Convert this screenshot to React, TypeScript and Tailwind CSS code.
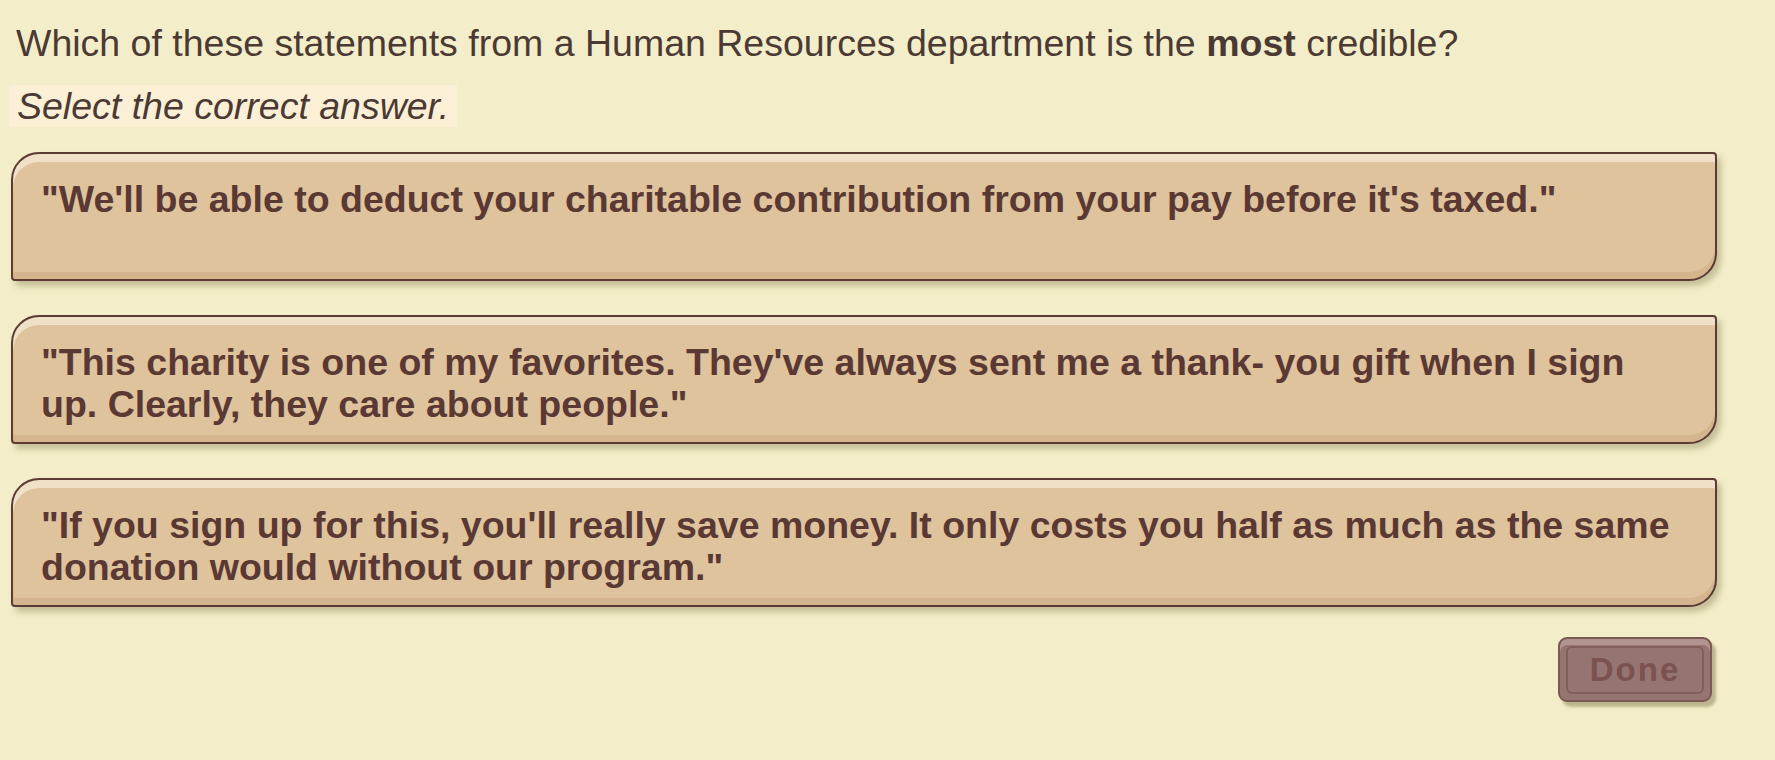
const answers = [
  "\"We'll be able to deduct your charitable contribution from your pay before it's taxed.\"",
  "\"This charity is one of my favorites. They've always sent me a thank- you gift when I sign up. Clearly, they care about people.\"",
  "\"If you sign up for this, you'll really save money. It only costs you half as much as the same donation would without our program.\"",
];

export default function App() {
  return (
    <div className="min-h-screen w-full bg-[#f3eec9] font-['Liberation_Sans',Arial,sans-serif]">
      <div className="pl-[9px] pt-[21px] w-[1717px]">
        <p className="pl-[7px] text-[37.5px] leading-[44px] text-[#4b3a34]">
          Which of these statements from a Human Resources department is the <b>most</b> credible?
        </p>

        <div className="mt-[20px] inline-block h-[42px] bg-[#fbf0d6] px-[8px] text-[37.5px] italic leading-[42px] text-[#4b3a34]">
          Select the correct answer.
        </div>

        <div className="mt-[25px] ml-[2px] flex flex-col gap-[34px]">
          {answers.map((answer, i) => (
            <button
              key={i}
              className="h-[129px] w-full rounded-tl-[28px] rounded-br-[28px] rounded-tr-[4px] rounded-bl-[4px] border-2 border-[#5b3b33] bg-[#dfc39c] px-[28px] pt-[24px] text-left align-top text-[37.5px] font-bold leading-[42px] text-[#5a3833] shadow-[inset_0_8px_0_#efe0c8,inset_0_-7px_0_#d4b58e,4px_5px_6px_rgba(110,100,60,0.35)] flex items-start"
            >
              <span>{answer}</span>
            </button>
          ))}
        </div>

        <div className="mt-[30px] flex justify-end pr-[5px]">
          <button className="relative h-[65px] w-[154px] rounded-[9px] border-2 border-[#7a5853] bg-[#967471] shadow-[inset_0_6px_0_#b29491,4px_5px_3px_rgba(120,110,70,0.45)]">
            <span className="absolute inset-x-[6px] top-[7px] bottom-[6px] rounded-[6px] border-2 border-[#835f5b]" />
            <span className="relative text-[33px] font-bold tracking-[2px] text-[#7b524f]">Done</span>
          </button>
        </div>
      </div>
    </div>
  );
}
